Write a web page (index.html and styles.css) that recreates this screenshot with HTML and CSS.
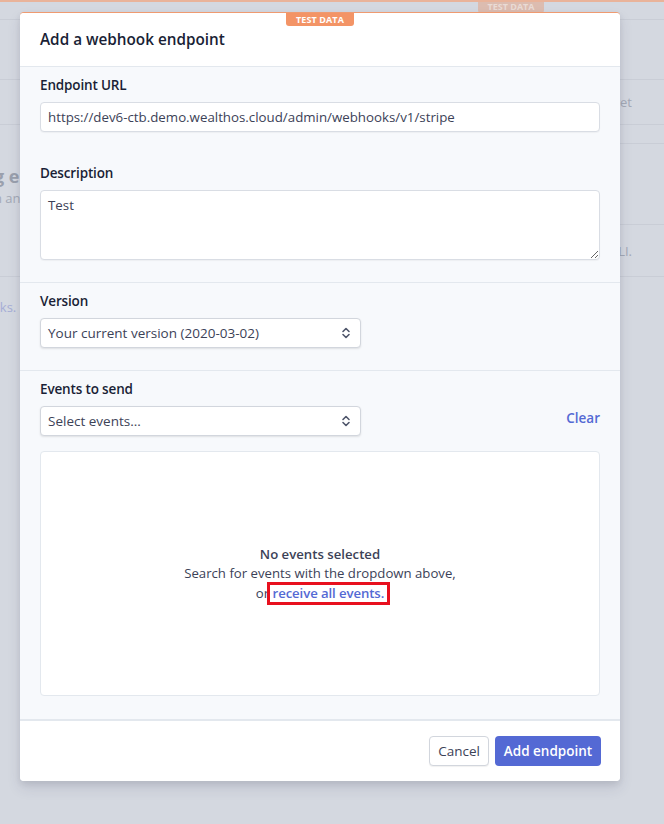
FILE: index.html
```html
<!DOCTYPE html>
<html>
<head>
<meta charset="utf-8">
<link rel="stylesheet" href="styles.css">
</head>
<body>
<div class="page">
  <div class="bg-topbar"><span class="bg-badge">TEST DATA</span></div>
  <div class="bg-rows">
    <div class="bg-row r1"></div>
    <div class="bg-row r2"><span class="bg-right">Secret</span></div>
    <div class="bg-row r3">
      <div class="bg-left"><span class="bg-title">g e</span><span class="bg-sub">n an</span></div>
      <div class="bg-rcol">
        <div class="bg-rblock"></div>
        <div class="bg-rlast"><span class="bg-right">CLI.</span></div>
      </div>
    </div>
    <div class="bg-row r4"><span class="bg-link">oks.</span></div>
  </div>
</div>

<div class="overlay">
  <div class="modal">
    <span class="test-badge">TEST DATA</span>
    <div class="modal-header">Add a webhook endpoint</div>
    <div class="modal-body">
      <div class="section">
        <label class="label">Endpoint URL</label>
        <input class="input" type="text" value="https://dev6-ctb.demo.wealthos.cloud/admin/webhooks/v1/stripe">
        <label class="label desc-label">Description</label>
        <textarea class="textarea">Test</textarea>
      </div>
      <div class="section">
        <label class="label">Version</label>
        <div class="select">
          <span>Your current version (2020-03-02)</span>
          <svg class="chev" width="10" height="14" viewBox="0 0 10 14"><path d="M2 5.5 L5 2.5 L8 5.5 M2 8.5 L5 11.5 L8 8.5" fill="none" stroke="#4f566b" stroke-width="1.6" stroke-linecap="round" stroke-linejoin="round"/></svg>
        </div>
      </div>
      <div class="section last">
        <label class="label">Events to send</label>
        <div class="events-row">
          <div class="select">
            <span>Select events...</span>
            <svg class="chev" width="10" height="14" viewBox="0 0 10 14"><path d="M2 5.5 L5 2.5 L8 5.5 M2 8.5 L5 11.5 L8 8.5" fill="none" stroke="#4f566b" stroke-width="1.6" stroke-linecap="round" stroke-linejoin="round"/></svg>
          </div>
          <a class="clear">Clear</a>
        </div>
        <div class="events-box">
          <div class="empty-title">No events selected</div>
          <div class="empty-text">Search for events with the dropdown above,</div>
          <div class="empty-text last-line">or <span class="highlight"><a class="link">receive all events.</a></span></div>
        </div>
      </div>
    </div>
    <div class="modal-footer">
      <button class="btn btn-cancel">Cancel</button>
      <button class="btn btn-primary">Add endpoint</button>
    </div>
  </div>
</div>
</body>
</html>
```
FILE: styles.css
```css
html, body {
  margin: 0;
  padding: 0;
}
body {
  width: 664px;
  height: 824px;
  background: #d4d8e0;
  font-family: "Open Sans", "Noto Sans", sans-serif;
  position: relative;
  overflow: hidden;
}
.page {
  position: absolute;
  inset: 0;
  color: #a3a9b6;
}
.bg-topbar {
  height: 17px;
  border-top: 2px solid #e9b39a;
  border-bottom: 1px solid #c9cdd6;
  position: relative;
}
.bg-badge {
  position: absolute;
  left: 478px;
  top: 0;
  width: 66px;
  height: 11px;
  background: #dcbcb0;
  color: #eadbd5;
  font-size: 9px;
  font-weight: 700;
  line-height: 10px;
  text-align: center;
  border-radius: 0 0 3px 3px;
}
.bg-rows {
  display: flex;
  flex-direction: column;
}
.bg-row {
  border-bottom: 1px solid #c9cdd6;
  box-sizing: border-box;
  display: flex;
  align-items: center;
  font-size: 13px;
}
.r1 { height: 60px; }
.r2 { height: 45px; justify-content: flex-end; }
.r3 { height: 152px; align-items: stretch; justify-content: space-between; }
.r4 { height: 60px; border-bottom: none; }
.bg-right { padding-right: 32px; }
.bg-left {
  display: flex;
  flex-direction: column;
  margin-left: -6px;
  padding-top: 39px;
}
.bg-title { font-size: 18px; font-weight: 700; color: #9aa0ad; line-height: 24px; }
.bg-sub { font-size: 13px; line-height: 20px; }
.bg-rcol {
  width: 64px;
  display: flex;
  flex-direction: column;
  padding-top: 18px;
}
.bg-rblock {
  height: 80px;
  border-top: 1px solid #c9cdd6;
  border-bottom: 1px solid #c9cdd6;
}
.bg-rlast {
  flex: 1;
  display: flex;
  align-items: center;
  justify-content: flex-end;
}
.bg-link { color: #a6add6; margin-left: -8px; margin-top: -1px; }

.overlay {
  position: absolute;
  left: 20px;
  top: 12px;
  width: 600px;
}
.modal {
  position: relative;
  background: #f7f9fc;
  border-radius: 4px;
  border-top: 1px solid #ef9a70;
  box-shadow: 0 7px 14px rgba(50, 50, 93, 0.12), 0 3px 6px rgba(0, 0, 0, 0.08);
  color: #1a1f36;
}
.test-badge {
  position: absolute;
  left: 266px;
  top: 0;
  width: 68px;
  height: 13px;
  background: #f39466;
  color: #fff;
  font-size: 9px;
  font-weight: 700;
  line-height: 13px;
  text-align: center;
  border-radius: 0 0 3px 3px;
  letter-spacing: 0.1px;
}
.modal-header {
  background: #fff;
  height: 54px;
  box-sizing: border-box;
  padding: 16px 20px 0;
  font-size: 15.3px;
  font-weight: 600;
  border-bottom: 1px solid #e3e8ee;
  border-radius: 4px 4px 0 0;
}
.section {
  padding: 8px 20px 22px;
  border-bottom: 1px solid #e3e8ee;
  display: flex;
  flex-direction: column;
}
.section.last {
  border-bottom: 2px solid #e3e8ee;
  padding-bottom: 23px;
}
.label {
  font-size: 13.5px;
  font-weight: 600;
  letter-spacing: -0.15px;
  line-height: 20px;
  color: #1a1f36;
  margin-bottom: 7px;
}
.desc-label {
  margin-top: 31px;
}
.input, .textarea {
  font-family: inherit;
  font-size: 13.3px;
  color: #3c4257;
  background: #fff;
  border: 1px solid #d9dde4;
  border-radius: 4px;
  box-shadow: 0 1px 1px rgba(0,0,0,0.04);
  box-sizing: border-box;
  padding: 0 7px;
  margin: 0;
  width: 560px;
  outline: none;
}
.input {
  height: 30px;
}
.textarea {
  height: 70px;
  padding-top: 5px;
  resize: vertical;
  line-height: 18px;
}
.select {
  width: 321px;
  height: 30px;
  box-sizing: border-box;
  background: #fff;
  border: 1px solid #d2d6dd;
  border-radius: 4px;
  box-shadow: 0 1px 2px rgba(0,0,0,0.10);
  display: flex;
  align-items: center;
  justify-content: space-between;
  padding: 0 9px 0 7px;
  font-size: 13.5px;
  font-weight: 500;
  color: #3c4257;
}
.events-row {
  display: flex;
  align-items: center;
  justify-content: space-between;
}
.clear {
  color: #5469d4;
  font-size: 13.5px;
  font-weight: 600;
  margin-top: -6px;
}
.events-box {
  margin-top: 15px;
  height: 245px;
  box-sizing: border-box;
  background: #fff;
  border: 1px solid #e3e8ee;
  border-radius: 4px;
  display: flex;
  flex-direction: column;
  align-items: center;
  justify-content: center;
  font-size: 13.2px;
  padding-bottom: 1px;
}
.empty-title {
  font-weight: 600;
  color: #3c4257;
  line-height: 19px;
}
.empty-text {
  color: #3c4257;
  line-height: 19px;
  height: 19px;
}
.last-line {
  padding-left: 6px;
}
.highlight {
  display: inline-block;
  border: 3px solid #e8101e;
  padding: 0 3px 0 3px;
  margin-left: -6px;
  line-height: 17px;
  margin-top: -1px;
}
.link {
  color: #5469d4;
  font-weight: 600;
  letter-spacing: -0.1px;
}
.modal-footer {
  background: #fff;
  height: 60px;
  box-sizing: border-box;
  display: flex;
  justify-content: flex-end;
  align-items: center;
  gap: 6px;
  padding: 0 19px 1px;
  border-radius: 0 0 4px 4px;
}
.btn {
  font-family: inherit;
  font-size: 13.5px;
  font-weight: 600;
  height: 30px;
  border-radius: 4px;
  padding: 0 8px;
  cursor: pointer;
}
.btn-cancel {
  background: #fff;
  color: #3c4257;
  border: 1px solid #d2d6dd;
  box-shadow: 0 1px 1px rgba(0,0,0,0.06);
  font-weight: 500;
  width: 60px;
}
.btn-primary {
  background: #5469d4;
  color: #fff;
  border: none;
  width: 106px;
}
```
